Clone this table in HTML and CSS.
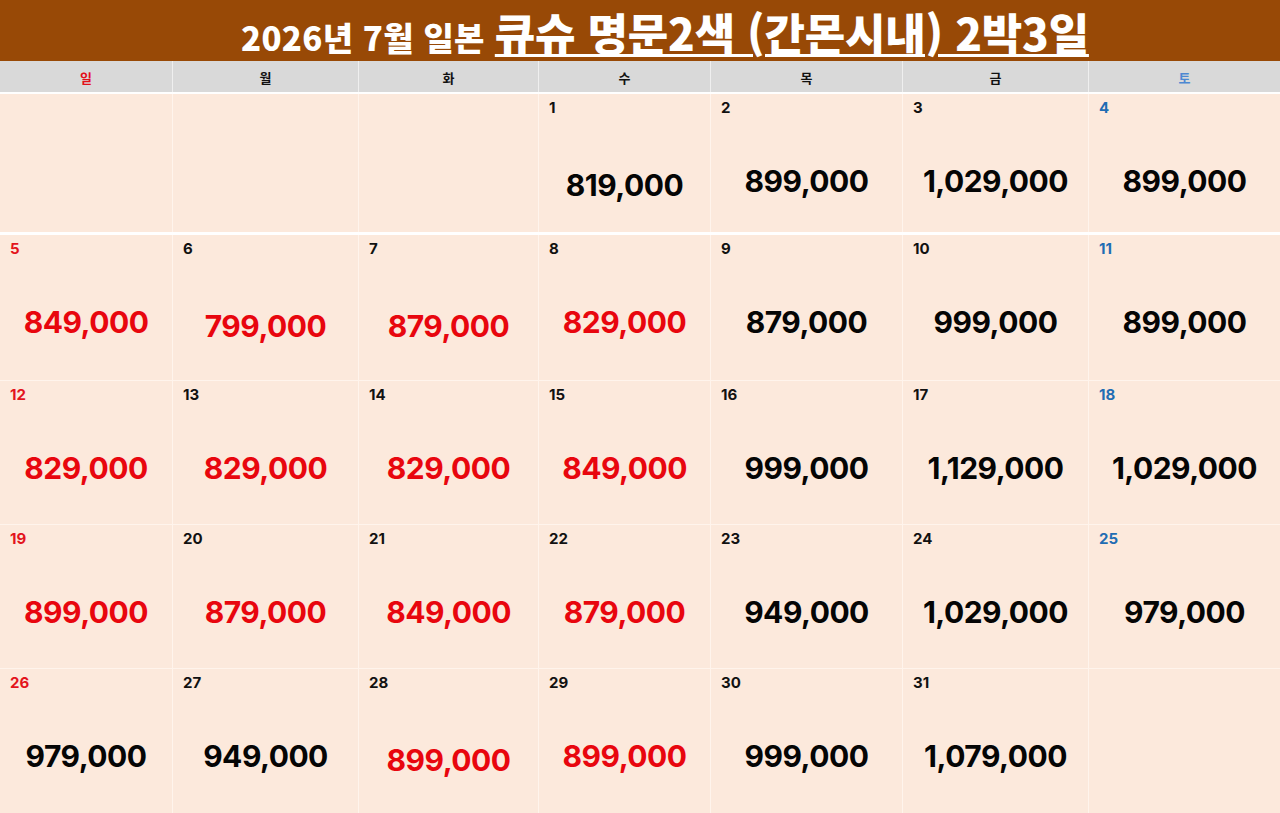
FILE: index.html
```html
<!DOCTYPE html>
<html lang="ko">
<head>
<meta charset="utf-8">
<title>2026년 7월 일본 큐슈 명문2색 2박3일</title>
<link rel="stylesheet" href="styles.css">
</head>
<body>
<div class="page">
  <header class="title-bar">
    <h1 class="title"><span class="t-small">2026년 7월 일본</span> <span class="t-big">큐슈 명문2색 (간몬시내) 2박3일</span></h1>
  </header>
  <div class="dow">
    <div class="dow-cell sun">일</div>
    <div class="dow-cell">월</div>
    <div class="dow-cell">화</div>
    <div class="dow-cell">수</div>
    <div class="dow-cell">목</div>
    <div class="dow-cell">금</div>
    <div class="dow-cell sat">토</div>
  </div>

  <div class="week w1">
    <div class="cell"></div>
    <div class="cell"></div>
    <div class="cell"></div>
    <div class="cell"><div class="date">1</div><div class="price lo">819,000</div></div>
    <div class="cell"><div class="date">2</div><div class="price">899,000</div></div>
    <div class="cell"><div class="date">3</div><div class="price">1,029,000</div></div>
    <div class="cell"><div class="date sat">4</div><div class="price">899,000</div></div>
  </div>

  <div class="week w2">
    <div class="cell"><div class="date sun">5</div><div class="price red">849,000</div></div>
    <div class="cell"><div class="date">6</div><div class="price red lo">799,000</div></div>
    <div class="cell"><div class="date">7</div><div class="price red lo">879,000</div></div>
    <div class="cell"><div class="date">8</div><div class="price red">829,000</div></div>
    <div class="cell"><div class="date">9</div><div class="price">879,000</div></div>
    <div class="cell"><div class="date">10</div><div class="price">999,000</div></div>
    <div class="cell"><div class="date sat">11</div><div class="price">899,000</div></div>
  </div>

  <div class="week w3">
    <div class="cell"><div class="date sun">12</div><div class="price red">829,000</div></div>
    <div class="cell"><div class="date">13</div><div class="price red">829,000</div></div>
    <div class="cell"><div class="date">14</div><div class="price red">829,000</div></div>
    <div class="cell"><div class="date">15</div><div class="price red">849,000</div></div>
    <div class="cell"><div class="date">16</div><div class="price">999,000</div></div>
    <div class="cell"><div class="date">17</div><div class="price">1,129,000</div></div>
    <div class="cell"><div class="date sat">18</div><div class="price">1,029,000</div></div>
  </div>

  <div class="week w3">
    <div class="cell"><div class="date sun">19</div><div class="price red">899,000</div></div>
    <div class="cell"><div class="date">20</div><div class="price red">879,000</div></div>
    <div class="cell"><div class="date">21</div><div class="price red">849,000</div></div>
    <div class="cell"><div class="date">22</div><div class="price red">879,000</div></div>
    <div class="cell"><div class="date">23</div><div class="price">949,000</div></div>
    <div class="cell"><div class="date">24</div><div class="price">1,029,000</div></div>
    <div class="cell"><div class="date sat">25</div><div class="price">979,000</div></div>
  </div>

  <div class="week w5">
    <div class="cell"><div class="date sun">26</div><div class="price">979,000</div></div>
    <div class="cell"><div class="date">27</div><div class="price">949,000</div></div>
    <div class="cell"><div class="date">28</div><div class="price red lo">899,000</div></div>
    <div class="cell"><div class="date">29</div><div class="price red">899,000</div></div>
    <div class="cell"><div class="date">30</div><div class="price">999,000</div></div>
    <div class="cell"><div class="date">31</div><div class="price">1,079,000</div></div>
    <div class="cell"></div>
  </div>
</div>
</body>
</html>
```

FILE: styles.css
```css
* { box-sizing: border-box; }
html, body { margin: 0; padding: 0; background: #ffffff; }
body { font-family: "Noto Sans CJK KR", "Noto Sans", sans-serif; }

.page {
  width: 1280px;
  height: 813px;
  overflow: hidden;
  display: flex;
  flex-direction: column;
}

.title-bar {
  height: 61px;
  flex: 0 0 61px;
  background: #984906;
  display: flex;
  align-items: flex-end;
  justify-content: center;
  padding: 0 0 2px 50px;
}
.title {
  margin: 0;
  color: #ffffff;
  font-family: "Noto Sans CJK KR", sans-serif;
  font-weight: 900;
  line-height: 1.2;
  white-space: nowrap;
  display: flex;
  align-items: baseline;
  gap: 10px;
}
.t-small {
  font-size: 33px;
  letter-spacing: 0.3px;
}
.t-big {
  font-size: 44px;
  letter-spacing: -0.2px;
  text-decoration: underline;
  text-decoration-thickness: 3px;
  text-underline-offset: 3px;
}

.dow {
  display: grid;
  grid-template-columns: 172px 185px 179px 171px 191px 185px 191px;
  column-gap: 1px;
  background: #efefef;
  height: 31px;
  flex: 0 0 31px;
}
.dow-cell {
  background: #d9d9d9;
  display: flex;
  align-items: center;
  justify-content: center;
  font-size: 13px;
  font-weight: 700;
  color: #111;
  padding-top: 2px;
}
.dow-cell.sun { color: #e3101a; }
.dow-cell.sat { color: #4d88d2; }

.week {
  display: grid;
  grid-template-columns: 172px 185px 179px 171px 191px 185px 191px;
  column-gap: 1px;
  background: #fff4ec;
}
.w1 { border-top: 2px solid #ffffff; height: 140px; flex: 0 0 140px; }
.w2 { border-top: 3px solid #ffffff; height: 148px; flex: 0 0 148px; }
.w3 { border-top: 1px solid #fff4ec; height: 144px; flex: 0 0 144px; }
.w5 { border-top: 1px solid #fff4ec; height: 145px; flex: 0 0 145px; }

.cell {
  background: #fce9dc;
  padding: 6px 10px 0;
  display: flex;
  flex-direction: column;
}
.date {
  font-family: "Inter", "Noto Sans", sans-serif;
  font-weight: 700;
  font-size: 15px;
  line-height: 16px;
  height: 16px;
  color: #111;
}
.date.sun { color: #e3141c; }
.date.sat { color: #1f6db3; }

.price {
  margin-top: 47px;
  font-family: "Inter", "Noto Sans", sans-serif;
  font-weight: 700;
  font-size: 30px;
  line-height: 36px;
  text-align: center;
  color: #050505;
  letter-spacing: -0.5px;
  margin-left: -10px;
  margin-right: -10px;
}
.price.red { color: #e8060e; }
.price.lo { margin-top: 51px; }
```
